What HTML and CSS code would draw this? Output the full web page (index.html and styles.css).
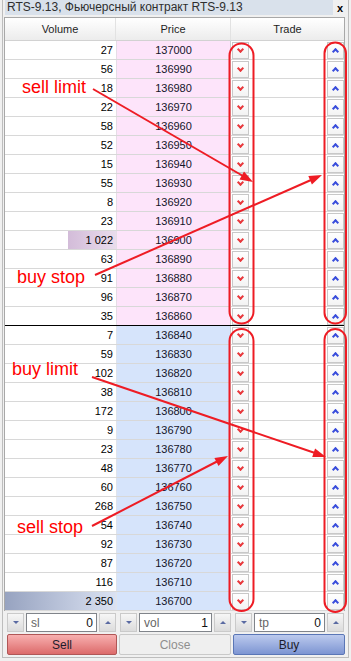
FILE: index.html
```html
<!DOCTYPE html>
<html>
<head>
<meta charset="utf-8">
<link rel="stylesheet" href="styles.css">
</head>
<body>
<div class="win">
  <div class="titlebar">
    <div class="title">RTS-9.13, Фьючерсный контракт RTS-9.13</div>
    <div class="x">x</div>
  </div>
  <div class="grid">
    <div class="head"><div class="h1">Volume</div><div class="h2">Price</div><div class="h3">Trade</div></div>
    <div class="row ask"><div class="vol">27</div><div class="price">137000</div><div class="trade"><span class="b dn"></span><span class="b up"></span></div></div>
    <div class="row ask"><div class="vol">56</div><div class="price">136990</div><div class="trade"><span class="b dn"></span><span class="b up"></span></div></div>
    <div class="row ask"><div class="vol">18</div><div class="price">136980</div><div class="trade"><span class="b dn"></span><span class="b up"></span></div></div>
    <div class="row ask"><div class="vol">22</div><div class="price">136970</div><div class="trade"><span class="b dn"></span><span class="b up"></span></div></div>
    <div class="row ask"><div class="vol">58</div><div class="price">136960</div><div class="trade"><span class="b dn"></span><span class="b up"></span></div></div>
    <div class="row ask"><div class="vol">52</div><div class="price">136950</div><div class="trade"><span class="b dn"></span><span class="b up"></span></div></div>
    <div class="row ask"><div class="vol">15</div><div class="price">136940</div><div class="trade"><span class="b dn"></span><span class="b up"></span></div></div>
    <div class="row ask"><div class="vol">55</div><div class="price">136930</div><div class="trade"><span class="b dn"></span><span class="b up"></span></div></div>
    <div class="row ask"><div class="vol">8</div><div class="price">136920</div><div class="trade"><span class="b dn"></span><span class="b up"></span></div></div>
    <div class="row ask"><div class="vol">23</div><div class="price">136910</div><div class="trade"><span class="b dn"></span><span class="b up"></span></div></div>
    <div class="row ask"><div class="vol bar" style="background-size:48px 100%">1 022</div><div class="price">136900</div><div class="trade"><span class="b dn"></span><span class="b up"></span></div></div>
    <div class="row ask"><div class="vol">63</div><div class="price">136890</div><div class="trade"><span class="b dn"></span><span class="b up"></span></div></div>
    <div class="row ask"><div class="vol">91</div><div class="price">136880</div><div class="trade"><span class="b dn"></span><span class="b up"></span></div></div>
    <div class="row ask"><div class="vol">96</div><div class="price">136870</div><div class="trade"><span class="b dn"></span><span class="b up"></span></div></div>
    <div class="row ask spread"><div class="vol">35</div><div class="price">136860</div><div class="trade"><span class="b dn"></span><span class="b up"></span></div></div>
    <div class="row bid"><div class="vol">7</div><div class="price">136840</div><div class="trade"><span class="b dn"></span><span class="b up"></span></div></div>
    <div class="row bid"><div class="vol">59</div><div class="price">136830</div><div class="trade"><span class="b dn"></span><span class="b up"></span></div></div>
    <div class="row bid"><div class="vol">102</div><div class="price">136820</div><div class="trade"><span class="b dn"></span><span class="b up"></span></div></div>
    <div class="row bid"><div class="vol">38</div><div class="price">136810</div><div class="trade"><span class="b dn"></span><span class="b up"></span></div></div>
    <div class="row bid"><div class="vol">172</div><div class="price">136800</div><div class="trade"><span class="b dn"></span><span class="b up"></span></div></div>
    <div class="row bid"><div class="vol">9</div><div class="price">136790</div><div class="trade"><span class="b dn"></span><span class="b up"></span></div></div>
    <div class="row bid"><div class="vol">23</div><div class="price">136780</div><div class="trade"><span class="b dn"></span><span class="b up"></span></div></div>
    <div class="row bid"><div class="vol">48</div><div class="price">136770</div><div class="trade"><span class="b dn"></span><span class="b up"></span></div></div>
    <div class="row bid"><div class="vol">60</div><div class="price">136760</div><div class="trade"><span class="b dn"></span><span class="b up"></span></div></div>
    <div class="row bid"><div class="vol">268</div><div class="price">136750</div><div class="trade"><span class="b dn"></span><span class="b up"></span></div></div>
    <div class="row bid"><div class="vol">54</div><div class="price">136740</div><div class="trade"><span class="b dn"></span><span class="b up"></span></div></div>
    <div class="row bid"><div class="vol">92</div><div class="price">136730</div><div class="trade"><span class="b dn"></span><span class="b up"></span></div></div>
    <div class="row bid"><div class="vol">87</div><div class="price">136720</div><div class="trade"><span class="b dn"></span><span class="b up"></span></div></div>
    <div class="row bid"><div class="vol">116</div><div class="price">136710</div><div class="trade"><span class="b dn"></span><span class="b up"></span></div></div>
    <div class="row bid"><div class="vol bar" style="background-size:111px 100%">2 350</div><div class="price">136700</div><div class="trade"><span class="b dn"></span><span class="b up"></span></div></div>
  </div>
  <div class="ctrls">
    <div class="grp g1"><span class="sp sdn"></span><div class="inp"><span class="lab">sl</span><span>0</span></div><span class="sp sup"></span></div>
    <div class="grp g2"><span class="sp sdn"></span><div class="inp"><span class="lab">vol</span><span>1</span></div><span class="sp sup"></span></div>
    <div class="grp g3"><span class="sp sdn"></span><div class="inp"><span class="lab">tp</span><span>0</span></div><span class="sp sup"></span></div>
  </div>
  <div class="btns">
    <div class="bb sell">Sell</div>
    <div class="bb cls">Close</div>
    <div class="bb buy">Buy</div>
  </div>
</div>
<svg class="notes" width="351" height="661" viewBox="0 0 351 661">
  <g class="ring">
    <rect x="229.5" y="43.5" width="24" height="280" rx="12"/>
    <rect x="324.5" y="42.5" width="21.5" height="281" rx="10.75"/>
    <rect x="229.5" y="329" width="24" height="282" rx="12"/>
    <rect x="324.5" y="329" width="21.5" height="283" rx="10.75"/>
  </g>
  <g class="arrow">
    <line x1="93" y1="89" x2="243" y2="176"/>
    <polygon points="253,182 239.5,179.4 244,171.6"/>
    <line x1="95" y1="275" x2="311" y2="180"/>
    <polygon points="322,175 311.9,184.4 308.3,176.1"/>
    <line x1="92" y1="377" x2="315" y2="453"/>
    <polygon points="326,457 312.2,457.1 315.1,448.5"/>
    <line x1="92" y1="526" x2="217" y2="461.5"/>
    <polygon points="228,456 218.5,466 214.4,458"/>
  </g>
  <text class="note" x="22" y="93">sell limit</text>
  <text class="note" x="17" y="283">buy stop</text>
  <text class="note" x="12" y="375">buy limit</text>
  <text class="note" x="17" y="533">sell stop</text>
</svg>
</body>
</html>
```
FILE: styles.css
```css
* { box-sizing: border-box; }
body {
  margin: 0;
  width: 351px;
  height: 661px;
  background: #f0f0f0;
  font-family: "Liberation Sans", Arial, sans-serif;
  font-size: 11px;
  color: #000;
  position: relative;
  overflow: hidden;
}
.win {
  margin-left: 2px;
  width: 347px;
  height: 658px;
  border: 1px solid #bdbdbd;
  border-top: 0;
  padding: 0 3px 0 1px;
  display: flex;
  flex-direction: column;
}
.titlebar {
  display: flex;
  height: 15px;
  margin-bottom: 2px;
}
.title {
  flex: 1;
  margin-left: 1px;
  background: #d9e1eb;
  padding-left: 2px;
  line-height: 15px;
  font-size: 12px;
  color: #2e2e2e;
  white-space: nowrap;
}
.x {
  width: 12px;
  text-align: center;
  font-weight: bold;
  font-size: 11px;
  line-height: 17px;
  padding-left: 2px;
}
.grid {
  border: 1px solid #a8a8a8;
  border-bottom: 0;
}
.head {
  display: flex;
  height: 23px;
  background: linear-gradient(#ffffff, #ececec);
  border-bottom: 1px solid #d2d2d2;
}
.head div {
  line-height: 22px;
  text-align: center;
  color: #1e1e1e;
}
.h1 { width: 111px; border-right: 1px solid #e2e2e2; }
.h2 { width: 115px; border-right: 1px solid #e2e2e2; }
.h3 { flex: 1; }
.row {
  display: flex;
  height: 19px;
  border-bottom: 1px solid #d8d8d8;
}
.row.spread { border-bottom-color: #000; }
.vol {
  width: 111px;
  text-align: right;
  padding-right: 3px;
  line-height: 18px;
  background: #fff;
}
.vol.bar {
  background-repeat: no-repeat;
  background-position: right top;
}
.ask .vol.bar { background-image: linear-gradient(to right, #d3bcd9, #e9dcec); }
.bid .vol.bar { background-image: linear-gradient(to right, #97a3c0, #dbe2f2); }
.price {
  width: 115px;
  text-align: center;
  line-height: 18px;
  color: #14142a;
  border-left: 1px solid #e6dde6;
  border-right: 1px solid #cfcfcf;
}
.ask .price { background: #fde4fa; }
.bid .price { background: #d6e4fb; border-left-color: #dfe4ec; }
.trade {
  flex: 1;
  display: flex;
  justify-content: space-between;
  align-items: flex-end;
  padding-left: 1px;
  background: #fff;
}
.b {
  width: 17px;
  height: 17px;
  border: 1px solid #c8c8c8;
  background: linear-gradient(#ffffff, #f3f3f3);
  display: flex;
  align-items: center;
  justify-content: center;
}
.b::before {
  content: "";
  width: 3px;
  height: 3px;
  border-style: solid;
  border-width: 0 2px 2px 0;
}
.dn::before { border-color: #e8383c; transform: translateY(-1px) rotate(45deg); }
.up::before { border-color: #3a4edc; transform: translateY(1px) rotate(-135deg); }
.ctrls {
  display: flex;
  height: 22px;
  padding-top: 2px;
}
.grp {
  display: flex;
  gap: 2px;
  padding: 0 1px 0 3px;
}
.g1 { width: 113px; }
.g2 { width: 115px; }
.g3 { flex: 1; }
.sp {
  width: 17px;
  height: 19px;
  border: 1px solid #cacaca;
  background: linear-gradient(#f6f6f6, #dcdcdc);
  display: flex;
  align-items: center;
  justify-content: center;
  flex: none;
}
.sp::before {
  content: "";
  border-left: 3px solid transparent;
  border-right: 3px solid transparent;
}
.sdn::before { border-top: 3px solid #5a6aa2; }
.sup::before { border-bottom: 3px solid #5a6aa2; }
.inp {
  flex: 1;
  height: 19px;
  border: 1px solid #80848a;
  background: #fff;
  display: flex;
  justify-content: space-between;
  align-items: center;
  padding: 0 3px 0 4px;
  font-size: 12px;
  color: #111;
}
.lab { color: #666; }
.btns {
  display: flex;
  gap: 2px;
  padding: 1px 0 0 3px;
}
.bb {
  height: 21px;
  display: flex;
  align-items: center;
  justify-content: center;
  font-size: 12px;
  border-radius: 2px;
}
.sell {
  width: 110px;
  background: linear-gradient(#f8b0b0, #dc6a6a);
  border: 1px solid #b05656;
  color: #1c1c2c;
}
.cls {
  width: 112px;
  background: #efefef;
  border: 1px solid #c9c9c9;
  color: #8e8e8e;
}
.buy {
  flex: 1;
  background: linear-gradient(#bccaee, #7d95d2);
  border: 1px solid #5a76b6;
  color: #1c1c2c;
}
.notes {
  position: absolute;
  left: 0;
  top: 0;
  pointer-events: none;
}
.ring rect {
  fill: none;
  stroke: #ee1c24;
  stroke-width: 2;
}
.arrow line {
  stroke: #ee1c24;
  stroke-width: 2;
}
.arrow polygon { fill: #ee1c24; }
.note {
  font-family: "Liberation Sans", Arial, sans-serif;
  font-size: 18px;
  fill: #ff0000;
}
```
